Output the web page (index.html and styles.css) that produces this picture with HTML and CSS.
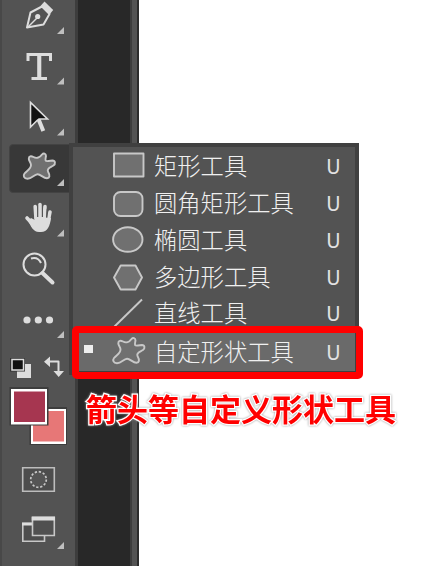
FILE: index.html
```
<!DOCTYPE html>
<html lang="zh-CN">
<head>
<meta charset="utf-8">
<title>自定形状工具</title>
<link rel="stylesheet" href="styles.css">
</head>
<body>
<div class="app">
  <div class="toolbar">
    <div class="tool pen"><svg viewBox="0 0 76 41"><path d="M27 27.5 30.5 12.5 42 6.5 49.5 14 43.5 24.5Z" class="line"/><path d="M28 27 37 18" class="line thin"/><circle cx="37.7" cy="16.5" r="2.6" class="fill"/><path d="M40.5 6 44.5 1.5 53.2 10 49.5 14.5Z" class="fill"/><path d="M57 34h7v-7z" class="corner"/></svg></div>
    <div class="tool"><svg viewBox="0 41 76 51"><path d="M26.5 53H52V61H49V56H41.3V77H47V80H31.5V77H37.2V56H29.5V61H26.5Z" class="fill"/><path d="M57 84.5h7v-7z" class="corner"/></svg></div>
    <div class="tool"><svg viewBox="0 92 76 51"><path d="M38 118 43.3 131" stroke="#ddd" stroke-width="4"/><path d="M30.5 102.5V127L37 120.5 39 119H47.5Z" class="arrow"/><path d="M57 135.500h7v-7z" class="corner"/></svg></div>
    <div class="tool active"><svg viewBox="0 143 76 49"><use href="#blob" transform="translate(22.500 152.500)"/><path d="M57 186h7v-7z" class="corner"/></svg></div>
    <div class="tool"><svg viewBox="0 192 76 51"><path d="M27 218 33.500 225M35.200 206.500 36 219M40 204.500V219M45 206.500 44 219M50 212 48 222" class="finger"/><path d="M31 218 35 220 34.500 217H48.500L51 218C50 226 47.500 232 41 232H39C33 232 31 226 28 221Z" class="fill"/><path d="M37.600 205V217M42.500 205V217M47.300 209 46.800 218" stroke="#535353" stroke-width="1"/><path d="M57 236.500h7v-7z" class="corner"/></svg></div>
    <div class="tool"><svg viewBox="0 243 76 51"><circle cx="34.500" cy="264.500" r="11" class="line"/><path d="M31 258.500Q38 256.500 41 263" class="line"/><path d="M42.500 273 52.500 282.500" class="handle"/></svg></div>
    <div class="tool"><svg viewBox="0 294 76 51"><circle cx="27" cy="320" r="3.600" class="fill"/><circle cx="38.300" cy="320" r="3.600" class="fill"/><circle cx="49.500" cy="320" r="3.600" class="fill"/><path d="M57 338h7v-7z" class="corner"/></svg></div>
    <div class="tool mini"><svg viewBox="0 345 76 40"><path d="M17 364H31V378H17Z" class="fill"/><path d="M10 358H25V371.500H10Z" fill="#333"/><path d="M12 359.500H23.500V370H12Z" fill="#111" stroke="#ddd" stroke-width="1.500"/><path d="M48 361.500H58.500V372" class="line"/><path d="M50 356.500V367L44 361.700ZM53.500 371H64L58.700 377Z" class="fill"/></svg></div>
    <div class="tool colors"><svg viewBox="0 385 76 62"><path d="M29.500 407H67V445H29.500Z" fill="#3d3d3d"/><path d="M31 409H66V444H31Z" fill="#fff"/><path d="M33 411H64V441.500H33Z" fill="#e77777"/><path d="M9.500 387H48.500V425.500H9.500Z" fill="#3d3d3d"/><path d="M11 389H47V424.500H11Z" fill="#fff"/><path d="M14 391.500H45V422H14Z" fill="#a63650"/></svg></div>
    <div class="tool mask"><svg viewBox="0 447 76 57"><path d="M22.700 467.700H54.300V491.300H22.700Z" fill="#4d4d4d" stroke="#bdbdbd" stroke-width="1.600"/><circle cx="38.500" cy="479.500" r="7.800" fill="#555" stroke="#c8c8c8" stroke-width="1.700" stroke-dasharray="2.300 1.784"/></svg></div>
    <div class="tool last"><svg viewBox="0 504 76 62"><path d="M22.800 523.500H44.500V541.300H22.800Z" fill="#4d4d4d" class="window"/><path d="M22 522.500H32V525.500H22Z" class="fill"/><path d="M32.500 517.500H54.300V535.500H32.500Z" fill="#505050" class="window"/><path d="M31.700 516.500H55V520.500H31.700Z" class="fill"/><path d="M57 549h7v-7z" class="corner"/></svg></div>
  </div>
  <div class="canvas"></div>
  <div class="divider"></div>
  <div class="page"></div>
</div>
<div class="menu">
  <div class="item r1"><svg viewBox="0 0 34 30"><path d="M2 3.500H31.500V26.500H2Z" class="shape"/></svg><span>矩形工具</span><b>U</b></div>
  <div class="item r2"><svg viewBox="0 0 34 30"><rect x="2" y="4" width="28.500" height="24" rx="6.500" class="shape"/></svg><span>圆角矩形工具</span><b>U</b></div>
  <div class="item r3"><svg viewBox="0 0 34 30"><ellipse cx="15.800" cy="15.500" rx="14.700" ry="12.300" class="shape"/></svg><span>椭圆工具</span><b>U</b></div>
  <div class="item r4"><svg viewBox="0 0 34 30"><path d="M2 16.500 8.700 4.500H23.500L30 16.500 23.500 28.500H8.700Z" class="shape"/></svg><span>多边形工具</span><b>U</b></div>
  <div class="item r5"><svg viewBox="0 0 34 30"><path d="M2.500 29.500 30 2.500" class="shape"/></svg><span>直线工具</span><b>U</b></div>
  <div class="item r6"><i></i><svg viewBox="0 0 34 30"><g id="blob" class="shape"><path d="M6.300 6.200C6.300 3.500 8.500 3.200 11 4.500 14 6.200 17.500 5 19.500 2 21 .2 23.500.8 23.500 3.500 22.800 7.500 22 9 26 8.500L30 8C32.800 8 33.300 11.500 31 13 28 15 24 15.500 25.500 19 28 23.500 27 25.500 24.500 25.800 21 26 18 21.500 15 21.700 11.500 22 9.500 26.200 5 26.200 1.200 26 .5 23 2 21 4.500 18 8.500 16.500 8.500 12.500 8.500 10 6.200 8.500 6.300 6.200Z"/></g></svg><span>自定形状工具</span><b>U</b></div>
</div>
<div class="frame"></div>
<div class="caption">箭头等自定义形状工具</div>
</body>
</html>
```
FILE: styles.css
```
* { box-sizing: border-box; }
body { margin: 0; background: #fff; font-family: "Noto Sans CJK SC", sans-serif; }
svg { display: block; fill: none; overflow: visible; }
.app { display: flex; width: 424px; height: 566px; overflow: hidden; }
.toolbar { width: 78px; background: #535353; border-right: 3px solid #3d3d3d; box-shadow: inset 2px 0 #484848; flex: none; }
.tool { height: 51px; width: 75px; }
.tool svg { width: 76px; height: 100%; }
.pen { height: 41px; }
.active { height: 49px; position: relative; }
.active::before { content: ""; position: absolute; left: 9px; top: 1px; width: 66px; height: 47px; background: #383838; border: 1px solid #434343; border-radius: 4px; }
.active svg { position: relative; }
.mini { height: 40px; }
.colors { height: 62px; }
.mask { height: 57px; }
.last { height: 62px; }
.canvas { width: 52px; background: #282828; }
.divider { width: 9px; background: #535353; border-left: 2px solid #3d3d3d; border-right: 2px solid #2c2c2c; }
.page { flex: 1; background: #fff; }
.line { stroke: #ddd; stroke-width: 2; stroke-linejoin: round; }
.thin { stroke-width: 1.5; }
.fill { fill: #ddd; }
.corner { fill: #bfbfbf; }
.arrow { fill: #111; stroke: #ddd; stroke-width: 1.6; }
.finger { stroke: #ddd; stroke-width: 3.6; stroke-linecap: round; }
.handle { stroke: #ddd; stroke-width: 4; stroke-linecap: round; }
.window { stroke: #c8c8c8; stroke-width: 1.6; }
.shape { fill: #707070; stroke: #c8c8c8; stroke-width: 1.9; stroke-linejoin: round; }
.menu { position: absolute; left: 69px; top: 143px; width: 290px; height: 232px; background: #535353; border: 4px solid #404040; }
.item { display: flex; align-items: center; padding-left: 39px; font-size: 23.3px; line-height: 32px; color: #f0f0f0; font-weight: 300; position: relative; }
.r1 { height: 36px; }
.r2 { height: 39px; }
.r3 { height: 34px; }
.r4 { height: 40px; }
.r5 { height: 32px; }
.r6 { height: 44px; background: #6a6a6a; border-bottom: 1px solid #404040; }
.item svg { width: 34px; height: 30px; flex: none; }
.item.r6 svg { margin-top: 5px; }
.item span { margin: -1px 0 0 8px; white-space: nowrap; }
.item b { position: absolute; left: 253px; font-size: 20.5px; font-weight: 400; margin-top: -1px; color: #e2e2e2; }
.item.r6 span, .item.r6 b { margin-top: 3px; }
.item i { position: absolute; left: 11px; top: 17px; width: 9px; height: 8px; background: #eee; }
.frame { position: absolute; left: 72px; top: 326px; width: 291px; height: 53px; border: 7px solid #f00; border-radius: 5px; }
.caption { position: absolute; left: 86px; top: 385px; font-size: 31px; line-height: 46px; font-weight: 700; color: #f00; white-space: nowrap; -webkit-text-stroke: 2.5px #fff; paint-order: stroke fill; filter: drop-shadow(0 0 1px #999); }
```
